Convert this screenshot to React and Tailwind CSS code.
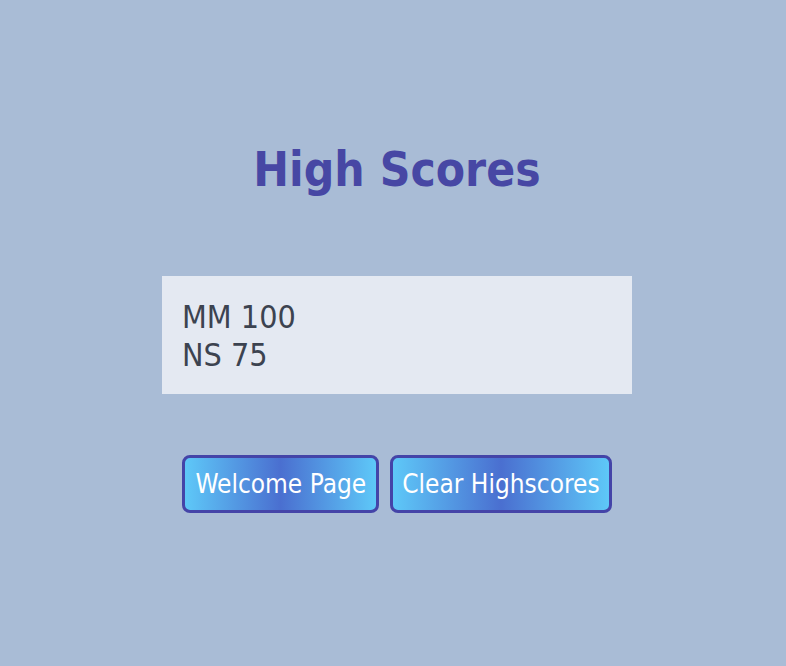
export default function App() {
  const font = { fontFamily: '"DejaVu Sans Condensed", "DejaVu Sans", sans-serif' };
  return (
    <div className="min-h-[666px] w-full bg-[#a9bcd6] flex flex-col items-center pl-2" style={font}>
      <h1 className="mt-[140px] text-[47.5px] leading-[60px] font-bold text-[#4747a4]">High Scores</h1>
      <div className="mt-[76px] w-[470px] h-[118px] bg-[#e4e9f2] px-5 py-[22px] text-[32px] leading-[38px] text-[#3c4350]">
        <div>MM 100</div>
        <div>NS 75</div>
      </div>
      <div className="mt-[61px] flex gap-[11px]">
        <button className="h-[58px] px-[10px] rounded-lg border-[3px] border-[#4444a8] text-white text-[26px] bg-[linear-gradient(to_right,#5ec8f8,#4a6fd0_50%,#5ec8f8)]">Welcome Page</button>
        <button className="h-[58px] px-[9px] rounded-lg border-[3px] border-[#4444a8] text-white text-[26px] bg-[linear-gradient(to_right,#5ec8f8,#4a6fd0_50%,#5ec8f8)]">Clear Highscores</button>
      </div>
    </div>
  );
}
